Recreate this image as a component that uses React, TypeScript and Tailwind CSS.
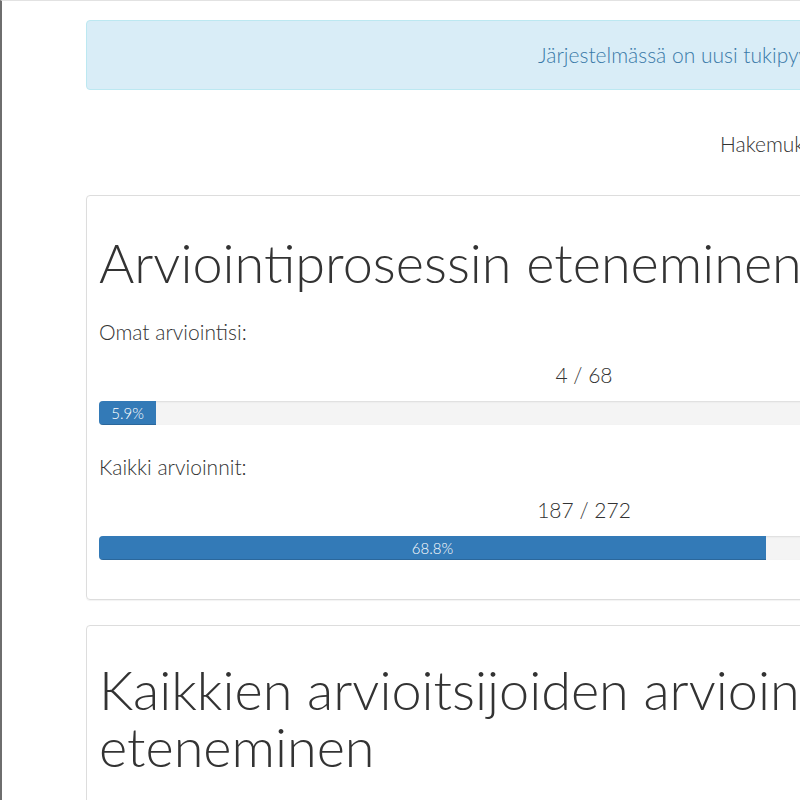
import React from "react";

function ProgressBar({ value }: { value: number }) {
  return (
    <div className="h-[24px] w-full overflow-hidden rounded-[4px] bg-[#f4f4f4] shadow-[inset_0_1px_2px_rgba(0,0,0,0.1)]">
      <div
        className="flex h-full items-center justify-center bg-[#337ab7] text-[15px] font-light text-white shadow-[inset_0_-1px_0_rgba(0,0,0,0.15)]"
        style={{ width: `${value}%` }}
      >
        {value.toFixed(1)}%
      </div>
    </div>
  );
}

function Stat({ label, done, total }: { label: string; done: number; total: number }) {
  return (
    <div className="flex flex-col">
      <p className="text-[21px] leading-[30px] font-light">{label}</p>
      <p className="mt-[13px] text-center text-[21px] leading-[30px] font-light">
        {done} / {total}
      </p>
      <div className="mt-[11px]">
        <ProgressBar value={(done / total) * 100} />
      </div>
    </div>
  );
}

export default function App() {
  return (
    <div
      className="relative h-[800px] w-[800px] overflow-hidden border-t border-l-2 border-t-[#e2e2e2] border-l-[#6e6e6e] bg-white text-[#333]"
      style={{ fontFamily: "Lato, 'Open Sans', sans-serif" }}
    >
      <div className="flex w-[1080px] flex-col pt-[19px] pl-[84px]">
        {/* notice */}
        <div className="flex h-[70px] w-[1300px] items-center rounded-[4px] border border-[#bce8f1] bg-[#d9edf7] pl-[451px] text-[21px] font-light text-[#3a7aa8]">
          Järjestelmässä on uusi tukipyyntö.
        </div>

        <p className="mt-[39px] pl-[634px] text-[21px] leading-[30px] font-light whitespace-nowrap">
          Hakemuksia yhteensä
        </p>

        {/* panel 1 */}
        <section className="mt-[36px] rounded-[4px] border border-[#ddd] px-[12px] pt-[38px] pb-[39px] shadow-[0_1px_1px_rgba(0,0,0,0.05)]">
          <h1 className="text-[54px] leading-[57px] font-light whitespace-nowrap">
            Arviointiprosessin eteneminen
          </h1>
          <div className="mt-[26px] flex flex-col gap-[27px]">
            <Stat label="Omat arviointisi:" done={4} total={68} />
            <Stat label="Kaikki arvioinnit:" done={187} total={272} />
          </div>
        </section>

        {/* panel 2 */}
        <section className="mt-[25px] rounded-[4px] border border-[#ddd] px-[12px] pt-[35px] pb-[38px]">
          <h1 className="text-[54px] leading-[57px] font-light">
            Kaikkien arvioitsijoiden arviointien eteneminen
          </h1>
        </section>
      </div>
    </div>
  );
}
